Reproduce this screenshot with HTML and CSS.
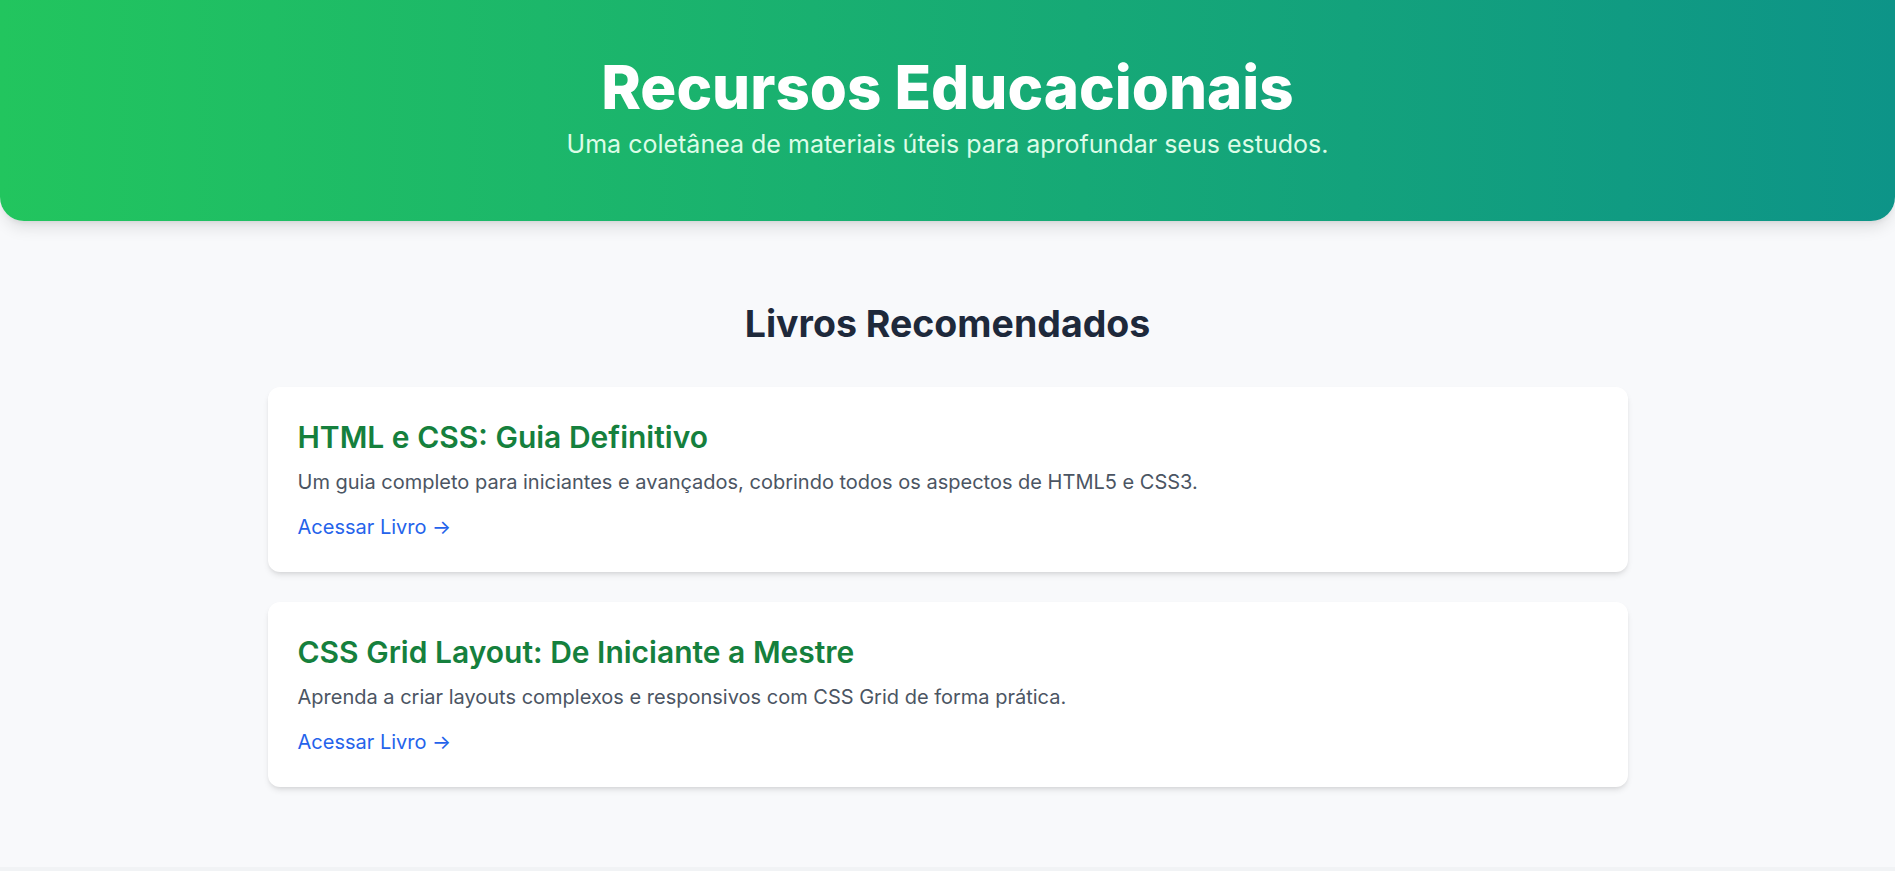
FILE: index.html
```html
<!DOCTYPE html>
<html lang="pt-BR">
<head>
<meta charset="utf-8">
<title>Recursos Educacionais</title>
<link rel="stylesheet" href="styles.css">
</head>
<body>
  <header class="hero">
    <h1 class="hero-title">Recursos Educacionais</h1>
    <p class="hero-subtitle">Uma coletânea de materiais úteis para aprofundar seus estudos.</p>
  </header>
  <main class="content">
    <section class="books">
      <h2 class="section-title">Livros Recomendados</h2>
      <div class="card-list">
        <article class="card">
          <h3 class="card-title">HTML e CSS: Guia Definitivo</h3>
          <p class="card-text">Um guia completo para iniciantes e avançados, cobrindo todos os aspectos de HTML5 e CSS3.</p>
          <a class="card-link" href="#">Acessar Livro →</a>
        </article>
        <article class="card">
          <h3 class="card-title">CSS Grid Layout: De Iniciante a Mestre</h3>
          <p class="card-text">Aprenda a criar layouts complexos e responsivos com CSS Grid de forma prática.</p>
          <a class="card-link" href="#">Acessar Livro →</a>
        </article>
      </div>
    </section>
  </main>
  <footer class="footer"></footer>
</body>
</html>
```
FILE: styles.css
```css
* {
  box-sizing: border-box;
}

html, body {
  margin: 0;
  padding: 0;
}

body {
  font-family: Inter, "Noto Sans", "Liberation Sans", sans-serif;
  background: #f8f9fb;
  color: #1e293b;
}

.hero {
  background: linear-gradient(90deg, #22c55e 0%, #0d9488 100%);
  border-radius: 0 0 24px 24px;
  box-shadow: 0 10px 15px -3px rgba(0, 0, 0, 0.1), 0 4px 6px -4px rgba(0, 0, 0, 0.1);
  padding: 57px 24px 61px;
  text-align: center;
  height: 221px;
}

.hero-title {
  margin: 0 0 11px;
  font-size: 60px;
  line-height: 60px;
  font-weight: 800;
  color: #ffffff;
}

.hero-subtitle {
  margin: 0;
  font-size: 25px;
  line-height: 32px;
  color: #dcfce7;
}

.content {
  padding: 83px 20px 80px;
}

.books {
  max-width: 1360px;
  margin: 0 auto;
}

.section-title {
  margin: 0 0 43px;
  font-size: 37.5px;
  line-height: 40px;
  font-weight: 700;
  text-align: center;
  color: #1e293b;
}

.card-list {
  display: flex;
  flex-direction: column;
  gap: 30px;
}

.card {
  background: #ffffff;
  border-radius: 12px;
  box-shadow: 0 4px 6px -1px rgba(0, 0, 0, 0.1), 0 2px 4px -2px rgba(0, 0, 0, 0.1);
  padding: 32px 30px 33px;
  display: flex;
  flex-direction: column;
  align-items: flex-start;
}

.card-title {
  margin: 0 0 13px;
  font-size: 30px;
  line-height: 36px;
  font-weight: 600;
  color: #15803d;
}

.card-text {
  margin: 0 0 19px;
  font-size: 20px;
  line-height: 28px;
  color: #4b5563;
}

.card-link {
  font-size: 20px;
  line-height: 24px;
  font-weight: 400;
  color: #2563eb;
  text-decoration: none;
}

.footer {
  background: #f1f3f5;
  height: 64px;
}
```
